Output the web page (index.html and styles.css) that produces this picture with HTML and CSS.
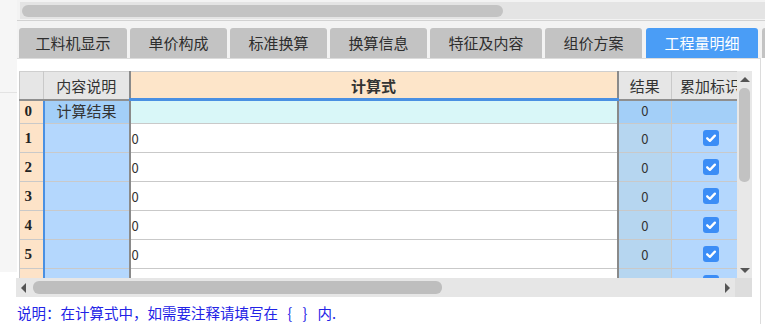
FILE: index.html
```html
<!DOCTYPE html>
<html lang="zh-CN">
<head>
<meta charset="utf-8">
<title>工程量明细</title>
<link rel="stylesheet" href="styles.css">
</head>
<body>
<div class="side"><div class="side-top"></div></div>
<div class="main">
  <div class="topbar">
    <div class="track"><div class="thumb"></div></div>
  </div>
  <div class="tabs">
    <div class="tab t-first">工料机显示</div>
    <div class="tab">单价构成</div>
    <div class="tab">标准换算</div>
    <div class="tab">换算信息</div>
    <div class="tab w5">特征及内容</div>
    <div class="tab t-narrow">组价方案</div>
    <div class="tab w5 active">工程量明细</div>
    <div class="tab stub"></div>
  </div>
  <div class="panel">
    <div class="gridwrap">
      <div class="gridview">
        <table class="grid">
          <colgroup>
            <col class="c-rh"><col class="c-name"><col class="c-formula"><col class="c-result"><col class="c-flag">
          </colgroup>
          <thead>
            <tr>
              <th class="corner"></th>
              <th class="h-name">内容说明</th>
              <th class="h-formula">计算式</th>
              <th class="h-result">结果</th>
              <th class="h-flag">累加标识</th>
            </tr>
          </thead>
          <tbody>
            <tr class="r0">
              <td class="rh">0</td>
              <td class="name">计算结果</td>
              <td class="formula"></td>
              <td class="result">0</td>
              <td class="flag"></td>
            </tr>
            <tr>
              <td class="rh">1</td><td class="name"></td><td class="formula">0</td><td class="result">0</td>
              <td class="flag"><svg class="cb" viewBox="0 0 16 16"><rect width="16" height="16" rx="3"/><path d="M4.2 8.3 L6.9 10.9 L11.9 5.6"/></svg></td>
            </tr>
            <tr>
              <td class="rh">2</td><td class="name"></td><td class="formula">0</td><td class="result">0</td>
              <td class="flag"><svg class="cb" viewBox="0 0 16 16"><rect width="16" height="16" rx="3"/><path d="M4.2 8.3 L6.9 10.9 L11.9 5.6"/></svg></td>
            </tr>
            <tr>
              <td class="rh">3</td><td class="name"></td><td class="formula">0</td><td class="result">0</td>
              <td class="flag"><svg class="cb" viewBox="0 0 16 16"><rect width="16" height="16" rx="3"/><path d="M4.2 8.3 L6.9 10.9 L11.9 5.6"/></svg></td>
            </tr>
            <tr>
              <td class="rh">4</td><td class="name"></td><td class="formula">0</td><td class="result">0</td>
              <td class="flag"><svg class="cb" viewBox="0 0 16 16"><rect width="16" height="16" rx="3"/><path d="M4.2 8.3 L6.9 10.9 L11.9 5.6"/></svg></td>
            </tr>
            <tr>
              <td class="rh">5</td><td class="name"></td><td class="formula">0</td><td class="result">0</td>
              <td class="flag"><svg class="cb" viewBox="0 0 16 16"><rect width="16" height="16" rx="3"/><path d="M4.2 8.3 L6.9 10.9 L11.9 5.6"/></svg></td>
            </tr>
            <tr>
              <td class="rh">6</td><td class="name"></td><td class="formula">0</td><td class="result">0</td>
              <td class="flag"><svg class="cb" viewBox="0 0 16 16"><rect width="16" height="16" rx="3"/><path d="M4.2 8.3 L6.9 10.9 L11.9 5.6"/></svg></td>
            </tr>
          </tbody>
        </table>
      </div>
      <div class="vscroll">
        <div class="arrow-up"></div>
        <div class="vthumb"></div>
        <div class="vspace"></div>
        <div class="arrow-down"></div>
      </div>
    </div>
    <div class="hscroll">
      <div class="htrack">
        <div class="arrow-left"></div>
        <div class="hthumb"></div>
        <div class="hspace"></div>
        <div class="arrow-right"></div>
      </div>
      <div class="hcorner"></div>
    </div>
    <div class="note">说明：在计算式中，如需要注释请填写在<span class="braces"> { } </span>内.</div>
  </div>
</div>
</body>
</html>
```

FILE: styles.css
```css
* { box-sizing: border-box; }

html, body {
  margin: 0;
  padding: 0;
}

body {
  width: 765px;
  height: 324px;
  overflow: hidden;
  display: flex;
  align-items: flex-start;
  background: #ffffff;
  font-family: "Noto Sans CJK SC", "Noto Sans", sans-serif;
  font-size: 14px;
  color: #333333;
}

.side {
  flex: none;
  width: 17px;
  height: 272px;
  background: #f6f6f6;
}

.side-top {
  height: 93px;
  border-bottom: 1px solid #e3e3e3;
}

.main {
  flex: 1;
  min-width: 0;
  display: flex;
  flex-direction: column;
}

/* top horizontal scrollbar */
.topbar {
  height: 21px;
  padding: 2px 0 0 3px;
  background: #f3f3f3;
  border-bottom: 1px solid #d2d2d2;
}

.track {
  height: 17px;
  background: #e4e4e4;
  padding: 3px 0 0 2px;
}

.thumb {
  width: 481px;
  height: 12px;
  border-radius: 6px;
  background: #c3c3c3;
}

/* tabs */
.tabs {
  display: flex;
  gap: 3px;
  padding: 7px 0 0 2px;
  background: #f3f3f3;
  height: 37px;
}

.tab {
  flex: none;
  width: 97px;
  height: 30px;
  line-height: 30px;
  text-align: center;
  background: #c3c3c3;
  color: #2e2e2e;
  border-radius: 3px 3px 0 0;
  font-size: 15px;
  white-space: nowrap;
}

.tab.t-first { width: 108px; }
.tab.w5 { width: 112px; }
.tab.t-narrow { width: 97px; }
.tab.active { margin-left: 1px; }

.tab.active {
  background: #4a9df6;
  color: #ffffff;
}

.tab.stub {
  width: 10px;
  margin-left: 1px;
}

/* panel */
.panel {
  background: #ffffff;
  border-top: 1px solid #dcdcdc;
  border-right: 1px solid #dcdcdc;
  margin-right: 4px;
  padding-top: 12px;
  padding-bottom: 4px;
}

.gridwrap {
  display: flex;
  margin-left: 2px;
  height: 207px;
}

.gridview {
  width: 718px;
  height: 207px;
  overflow: hidden;
  flex: none;
}

.grid {
  border-collapse: collapse;
  table-layout: fixed;
  width: 731px;
}

.c-rh { width: 24px; }
.c-name { width: 86px; }
.c-formula { width: 488px; }
.c-result { width: 54px; }
.c-flag { width: 79px; }

.grid th, .grid td {
  border: 1px solid #c9c9c9;
  padding: 0;
  overflow: hidden;
  white-space: nowrap;
}

.grid th {
  height: 28px;
  font-weight: normal;
  background: #e6e6e6;
  font-size: 15px;
  color: #333333;
  border-top-color: #cfcfcf;
  border-bottom: 2px solid #8f8f8f;
}

.grid th.h-formula {
  background: #fde5c9;
  font-weight: bold;
  border-bottom: 3px solid #4a90e2;
  border-right: 2px solid #8a8a8a;
}

.grid th.h-name {
  border-right: 2px solid #8a8a8a;
}

.grid th.h-flag {
  text-align: left;
  padding-left: 8px;
  border-right: none;
}

.grid td {
  height: 29px;
  font-size: 13px;
}

.grid tr.r0 td {
  height: 24px;
}

.grid td.rh {
  background: #fde3c8;
  font-family: "Liberation Serif", serif;
  font-weight: bold;
  font-size: 15px;
  color: #222222;
  text-align: center;
  padding-right: 6px;
  border-right: 2px solid #4a90e2;
}

.grid td.name {
  background: #b4d7fd;
  text-align: center;
  font-size: 15px;
  border-right: 2px solid #8a8a8a;
  vertical-align: top;
  line-height: 20px;
}

.grid td.formula {
  background: #ffffff;
  padding-left: 1px;
  border-right: 2px solid #8a8a8a;
  color: #333333;
}

.grid td.result {
  background: #b6d6f0;
  text-align: center;
  color: #333333;
}

.grid td.flag {
  background: #b4d7fd;
  text-align: center;
  border-right: none;
  line-height: 0;
}

.grid tr.r0 td.name,
.grid tr.r0 td.result,
.grid tr.r0 td.flag {
  background: #a3cff8;
}

.grid tr.r0 td.formula {
  background: #d9f7f8;
}

.grid tr.r0 td.result {
  vertical-align: top;
  line-height: 20px;
}

.cb {
  width: 16px;
  height: 16px;
  display: inline-block;
}

.cb rect { fill: #3b8df6; }

.cb path {
  fill: none;
  stroke: #ffffff;
  stroke-width: 2.3;
  stroke-linecap: round;
  stroke-linejoin: round;
}

/* vertical scrollbar */
.vscroll {
  flex: none;
  width: 15px;
  height: 207px;
  background: #e8e8e8;
  display: flex;
  flex-direction: column;
  align-items: center;
  padding: 6px 0 5px;
}

.arrow-up {
  width: 0;
  height: 0;
  border-left: 5px solid transparent;
  border-right: 5px solid transparent;
  border-bottom: 5px solid #555555;
}

.vthumb {
  margin-top: 6px;
  width: 11px;
  height: 94px;
  border-radius: 5px;
  background: #c2c2c2;
}

.vspace { flex: 1; }

.arrow-down {
  width: 0;
  height: 0;
  border-left: 5px solid transparent;
  border-right: 5px solid transparent;
  border-top: 5px solid #555555;
}

/* bottom horizontal scrollbar */
.hscroll {
  display: flex;
  height: 19px;
  margin-top: 0;
  margin-left: -1px;
}

.htrack {
  width: 719px;
  flex: none;
  background: #e6e6e6;
  display: flex;
  align-items: center;
  padding: 0 5px 0 5px;
}

.arrow-left {
  width: 0;
  height: 0;
  border-top: 5px solid transparent;
  border-bottom: 5px solid transparent;
  border-right: 5px solid #555555;
}

.hthumb {
  margin-left: 7px;
  width: 409px;
  height: 13px;
  border-radius: 6px;
  background: #bebebe;
}

.hspace { flex: 1; }

.arrow-right {
  width: 0;
  height: 0;
  border-top: 5px solid transparent;
  border-bottom: 5px solid transparent;
  border-left: 5px solid #555555;
}

.hcorner {
  width: 17px;
  flex: none;
  background: #dddddd;
}

.note {
  margin-top: 6px;
  color: #2323e6;
  font-size: 14.5px;
  line-height: 20px;
  white-space: nowrap;
}

.note .braces {
  word-spacing: 5px;
  letter-spacing: 1px;
}
```
